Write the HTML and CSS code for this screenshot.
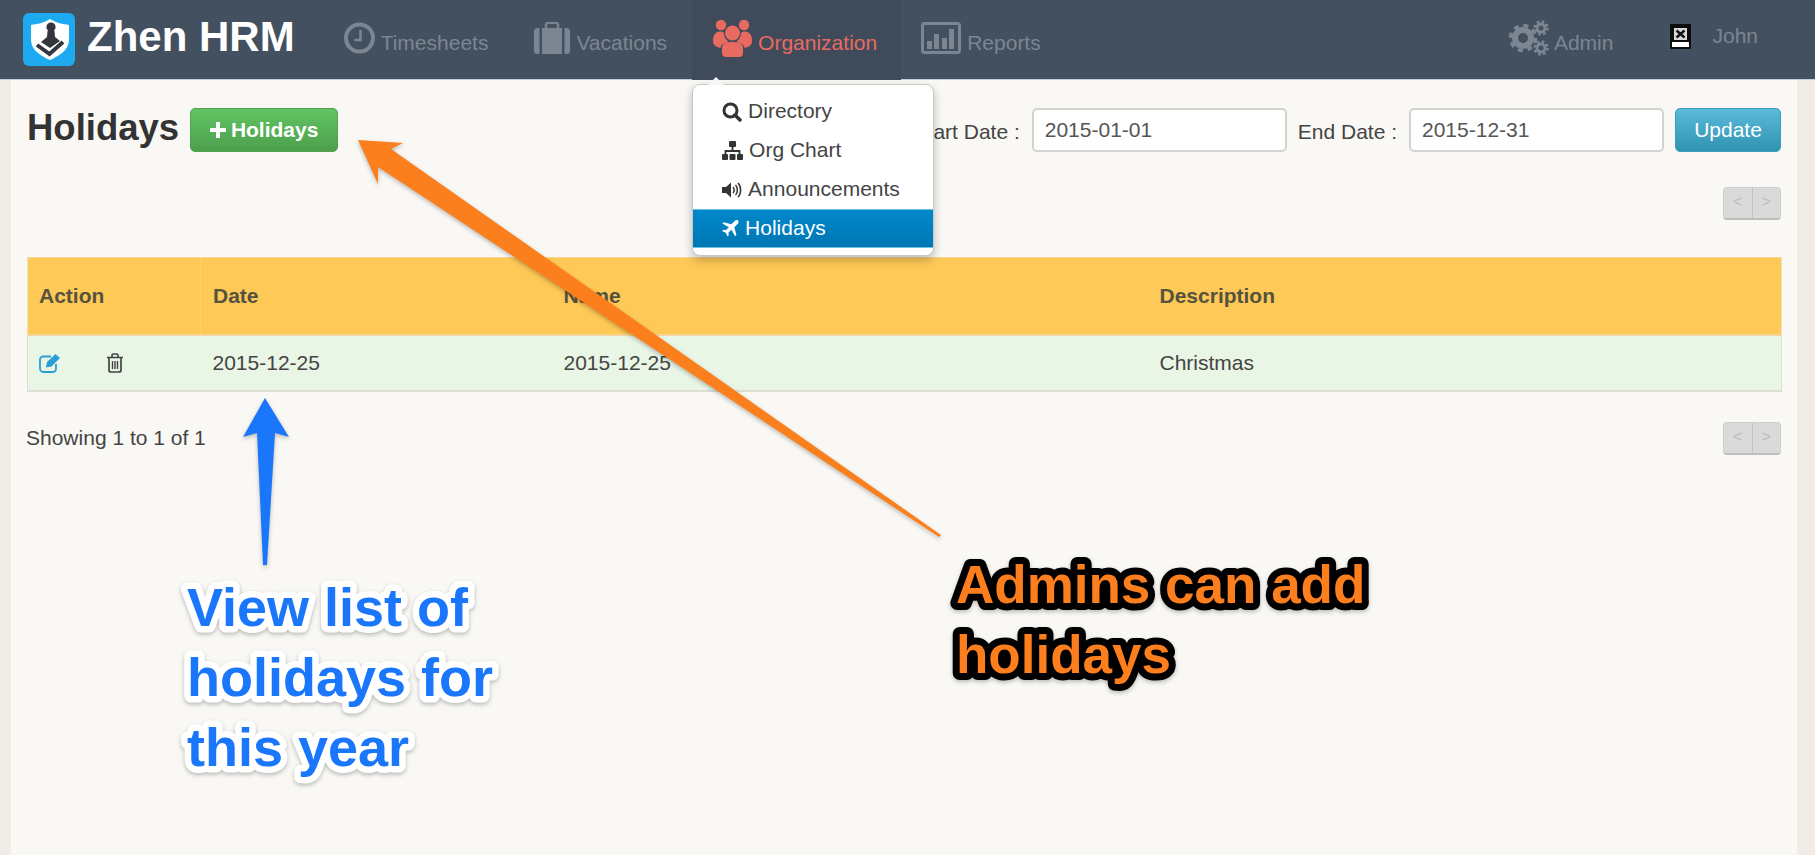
FILE: index.html
```html
<!DOCTYPE html>
<html lang="en">
<head>
    <meta charset="UTF-8">
    <title>Zhen HRM - Holidays</title>
    <link rel="stylesheet" href="styles.css">
</head>
<body>
    <header class="topbar">
        <div class="brand">
            <svg class="logo" viewBox="0 0 52 53">
                <rect width="52" height="53" rx="6" fill="#1eaaf0"/>
                <path d="M27 6C33 10 40 11 46 12V27C46 37 36 43 27 47C18 43 8 37 8 27V12C14 11 21 10 27 6Z" fill="#fff"/>
                <circle cx="28" cy="14" r="4.6" fill="#33363c"/>
                <path d="M24.500 18H31.500L32 24L37 28L27 35L18 29L24 24Z" fill="#33363c"/>
                <path d="M14 32L26.500 41L40 29" fill="none" stroke="#33363c" stroke-width="4"/>
            </svg>
            <span class="brand-name">Zhen HRM</span>
        </div>
        <nav class="nav">
            <a class="nav-item">
                <svg class="nav-icon" width="31" height="32" viewBox="0 0 31 32"><circle cx="15.500" cy="16" r="13.500" fill="none" stroke="currentColor" stroke-width="4"/><path d="M16.500 8V18H10.500" fill="none" stroke="currentColor" stroke-width="2.500"/></svg>
                <span class="nav-label">Timesheets</span>
            </a>
            <a class="nav-item">
                <svg class="nav-icon" width="36" height="32" viewBox="0 0 36 37" preserveAspectRatio="none"><path d="M12 7V3.500C12 2 13 1 14.500 1H21.500C23 1 24 2 24 3.500V7" fill="none" stroke="currentColor" stroke-width="2.500"/><rect x="8" y="7" width="20" height="30" fill="currentColor"/><path d="M5.500 7V37H3.500C1.500 37 0 35.500 0 33.500V10.500C0 8.500 1.500 7 3.500 7ZM30.500 7H32.500C34.500 7 36 8.500 36 10.500V33.500C36 35.500 34.500 37 32.500 37H30.500Z" fill="currentColor"/></svg>
                <span class="nav-label">Vacations</span>
            </a>
            <a class="nav-item nav-item-active">
                <svg class="nav-icon" width="39" height="38" viewBox="0 0 39 38"><circle cx="8" cy="6" r="5.200" fill="currentColor"/><circle cx="31" cy="6" r="5.200" fill="currentColor"/><circle cx="19.500" cy="14" r="7.500" fill="currentColor"/><path d="M0 22C0 15 3 12.500 8 12.500C10 12.500 11 13.500 11 15C11 18 14 22 16 23C11 24 7.500 26 7.500 29C3 28 0 26 0 22ZM39 22C39 15 36 12.500 31 12.500C29 12.500 28 13.500 28 15C28 18 25 22 23 23C28 24 31.500 26 31.500 29C36 28 39 26 39 22Z" fill="currentColor"/><path d="M9 34V29C9 25 13 23 19.500 23C26 23 30 25 30 29V34C30 36.500 28.500 38 26 38H13C10.500 38 9 36.500 9 34Z" fill="currentColor"/></svg>
                <span class="nav-label">Organization</span>
                <div class="dropdown">
                    <span class="dropdown-caret"></span>
                    <div class="dropdown-item">
                        <svg width="20" height="20" viewBox="0 0 20 20"><circle cx="8.500" cy="8.500" r="6.500" fill="none" stroke="currentColor" stroke-width="3"/><path d="M13 13L18 18" stroke="currentColor" stroke-width="3.500" stroke-linecap="round"/></svg>
                        <span>Directory</span>
                    </div>
                    <div class="dropdown-item">
                        <svg width="21" height="20" viewBox="0 0 21 20"><rect x="7" y="0" width="7" height="6" rx="1" fill="currentColor"/><path d="M10.500 6V10M3.500 14V10H17.500V14" fill="none" stroke="currentColor" stroke-width="1.800"/><rect x="0" y="13" width="6" height="6" rx="1" fill="currentColor"/><rect x="7.500" y="13" width="6" height="6" rx="1" fill="currentColor"/><rect x="15" y="13" width="6" height="6" rx="1" fill="currentColor"/></svg>
                        <span>Org Chart</span>
                    </div>
                    <div class="dropdown-item">
                        <svg width="20" height="20" viewBox="0 0 20 20"><path d="M0 7H4L9 2.500V17.500L4 13H0Z" fill="currentColor"/><path d="M11 7C12.500 8.500 12.500 11.500 11 13M13.500 5C16 7.500 16 12.500 13.500 15M16 3C19.500 6.500 19.500 13.500 16 17" fill="none" stroke="currentColor" stroke-width="1.500"/></svg>
                        <span>Announcements</span>
                    </div>
                    <div class="dropdown-item dropdown-item-active">
                        <svg width="17" height="19" viewBox="2 1 20 21"><path d="M21 2C20 1 18 1.500 16.500 3L13 6.500L4 4L2.500 5.500L10 10L6.500 13.500L3.500 13L2 14.500L6.500 16.500L8.500 21L10 19.500L9.500 16.500L13 13L17.500 20.500L19 19L16.500 10L20 6.500C21.500 5 22 3 21 2Z" fill="currentColor"/></svg>
                        <span>Holidays</span>
                    </div>
                </div>
            </a>
            <a class="nav-item">
                <svg class="nav-icon" width="40" height="32" viewBox="0 0 40 32"><rect x="1.500" y="1.500" width="37" height="29" rx="2" fill="none" stroke="currentColor" stroke-width="3"/><rect x="6" y="19" width="5" height="8" fill="currentColor"/><rect x="13" y="12" width="5" height="15" fill="currentColor"/><rect x="21" y="16" width="5" height="11" fill="currentColor"/><rect x="28" y="7" width="5" height="20" fill="currentColor"/></svg>
                <span class="nav-label">Reports</span>
            </a>
        </nav>
        <div class="nav-right">
            <a class="nav-user">
                <svg class="nav-icon" width="40" height="36" viewBox="0 0 40 36">
                    <circle cx="14" cy="18" r="8" fill="none" stroke="currentColor" stroke-width="6"/>
                    <circle cx="14" cy="18" r="12.500" fill="none" stroke="currentColor" stroke-width="3.500" stroke-dasharray="5 4.820"/>
                    <circle cx="32" cy="8" r="4" fill="none" stroke="currentColor" stroke-width="3"/>
                    <circle cx="32" cy="8" r="6.500" fill="none" stroke="currentColor" stroke-width="2.500" stroke-dasharray="2.600 2.500"/>
                    <circle cx="32" cy="28" r="4" fill="none" stroke="currentColor" stroke-width="3"/>
                    <circle cx="32" cy="28" r="6.500" fill="none" stroke="currentColor" stroke-width="2.500" stroke-dasharray="2.600 2.500"/>
                </svg>
                <span class="nav-label">Admin</span>
            </a>
            <a class="nav-user nav-user-john">
                <svg class="broken-img" width="21" height="25" viewBox="0 0 21 25"><rect width="21" height="25" rx="1" fill="#0c0c0c"/><rect x="2" y="18" width="17" height="5" fill="#fff"/><rect x="4" y="4" width="13" height="12" fill="#d8d8d8"/><path d="M6.500 6.500L14.500 13.500M14.500 6.500L6.500 13.500" stroke="#111" stroke-width="2.500"/></svg>
                <span>John</span>
            </a>
        </div>
    </header>

    <main class="content">
        <div class="toolbar">
            <h1 class="page-title">Holidays</h1>
            <button class="btn btn-green">
                <svg width="16" height="16" viewBox="0 0 16 16"><path d="M6 0H10V6H16V10H10V16H6V10H0V6H6Z" fill="currentColor"/></svg>
                Holidays
            </button>
            <form class="filter">
                <label class="filter-label">Start Date :</label>
                <input class="filter-input" type="text" value="2015-01-01">
                <label class="filter-label">End Date :</label>
                <input class="filter-input" type="text" value="2015-12-31">
                <button class="btn btn-blue" type="button">Update</button>
            </form>
        </div>

        <div class="pager-row pager-row-top">
            <div class="pager"><span>&lt;</span><span>&gt;</span></div>
        </div>

        <table class="grid">
            <colgroup>
                <col class="col-action">
                <col class="col-date">
                <col class="col-name">
                <col class="col-desc">
            </colgroup>
            <thead>
                <tr>
                    <th>Action</th>
                    <th>Date</th>
                    <th>Name</th>
                    <th>Description</th>
                </tr>
            </thead>
            <tbody>
                <tr>
                    <td>
                        <div class="row-actions">
                            <svg class="icon-edit" width="22" height="20" viewBox="0 0 22 20"><path d="M12 3.500H4C2.500 3.500 1 5 1 6.500V15.500C1 17.500 2.500 19 4 19H13.500C15.500 19 17 17.500 17 15.500V11" fill="none" stroke="currentColor" stroke-width="1.800"/><path d="M8 9L16.500 1L21 5L12.500 13.500L7 14.500Z" fill="currentColor"/></svg>
                            <svg class="icon-trash" width="18" height="20" viewBox="0 0 18 20"><path d="M1 4.500H17M6 4.500V2.500C6 1.500 6.800 1 7.500 1H10.500C11.200 1 12 1.500 12 2.500V4.500M3 4.500V17C3 18.200 3.800 19 5 19H13C14.200 19 15 18.200 15 17V4.500" fill="none" stroke="currentColor" stroke-width="1.700"/><path d="M6.500 8V16M9 8V16M11.500 8V16" stroke="currentColor" stroke-width="1.400"/></svg>
                        </div>
                    </td>
                    <td>2015-12-25</td>
                    <td>2015-12-25</td>
                    <td>Christmas</td>
                </tr>
            </tbody>
        </table>

        <div class="pager-row pager-row-bottom">
            <span class="showing">Showing 1 to 1 of 1</span>
            <div class="pager"><span>&lt;</span><span>&gt;</span></div>
        </div>
    </main>

    <!-- callouts drawn over the screenshot -->
    <svg class="arrows" width="1815" height="855" viewBox="0 0 1815 855">
        <path d="M358 140L403 143L391 149L941 535L939 537L378 167L378 184Z" fill="#fb7f1c"/>
        <path d="M265 398L289 437L275 433L267 565H263L257 433L243 437Z" fill="#1a76fb"/>
        <text class="note note-blue">
            <tspan x="187" y="626">View list of</tspan>
            <tspan x="187" y="696">holidays for</tspan>
            <tspan x="187" y="766">this year</tspan>
        </text>
        <text class="note note-orange">
            <tspan x="956" y="603">Admins can add</tspan>
            <tspan x="956" y="673">holidays</tspan>
        </text>
    </svg>
</body>
</html>
```

FILE: styles.css
```css
body {
    margin: 0;
    height: 855px;
    overflow: hidden;
    background-color: #f1ede6;
    font-family: "Liberation Sans", Arial, sans-serif;
    font-size: 21px;
    color: #444;
}

/* top bar */
.topbar {
    display: flex;
    height: 79px;
    background-color: #435060;
    border-bottom: 1px solid #c9ced4;
}

.brand {
    display: flex;
    align-items: center;
    gap: 12px;
    margin-left: 23px;
}

.logo {
    width: 52px;
    height: 53px;
}

.brand-name {
    color: #fff;
    font-size: 42px;
    font-weight: bold;
    line-height: 1;
    margin-top: -6px;
}

.nav {
    display: flex;
    margin-left: 26px;
}

.nav-item {
    position: relative;
    display: flex;
    align-items: center;
    gap: 6px;
    padding: 0 23px;
    color: #7c8692;
}

.nav-label {
    margin-top: 6px;
}

.nav-icon {
    margin-bottom: 4px;
}

.nav-item-active {
    height: 80px;
    margin: 0 -3px 0 2px;
    padding: 0 24px 0 21px;
    background-color: #3f4b5a;
    color: #e96a60;
}

.nav-right {
    display: flex;
    margin-left: auto;
    padding-right: 57px;
    gap: 57px;
}

.nav-user {
    display: flex;
    align-items: center;
    gap: 5px;
    color: #7c8692;
}

.nav-user-john {
    gap: 21px;
    margin-bottom: 7px;
}

.broken-img {
    margin-top: 1px;
}

/* organization menu */
.dropdown {
    position: absolute;
    top: 84px;
    left: 0;
    z-index: 5;
    box-sizing: border-box;
    width: 242px;
    height: 172px;
    padding: 7px 0;
    background-color: #fff;
    border: 1px solid #c8c8c8;
    border-radius: 8px;
    box-shadow: 0 4px 10px rgba(0, 0, 0, 0.25);
    color: #444;
}

.dropdown-caret {
    position: absolute;
    top: -8px;
    left: 15px;
    border-left: 8px solid transparent;
    border-right: 8px solid transparent;
    border-bottom: 8px solid #f6f6f4;
}

.dropdown-item {
    display: flex;
    align-items: center;
    gap: 6px;
    box-sizing: border-box;
    height: 39px;
    padding-left: 29px;
}

.dropdown-item span {
    margin-top: -1px;
}

.dropdown-item svg {
    color: #333;
}

.dropdown-item-active {
    background: linear-gradient(#0088cc, #0077b3);
    border-top: 1px solid #6cc4e4;
    border-bottom: 1px solid #6cc4e4;
    color: #fff;
}

.dropdown-item-active svg {
    color: #fff;
}

/* page */
.content {
    box-sizing: border-box;
    height: 775px;
    margin: 0 18px 0 11px;
    padding: 28px 16px 0;
    background-color: #f9f8f4;
}

.toolbar {
    display: flex;
    align-items: center;
    height: 44px;
}

.page-title {
    margin: -4px 11px 0 0;
    font-size: 36.500px;
    line-height: 44px;
    color: #333;
}

.btn {
    box-sizing: border-box;
    height: 44px;
    border: 1px solid;
    border-radius: 5px;
    font-family: inherit;
    color: #fff;
}

.btn-green {
    display: flex;
    align-items: center;
    gap: 5px;
    width: 148px;
    justify-content: center;
    font-size: 21px;
    font-weight: bold;
    background: linear-gradient(#62c462, #4c9f4c);
    border-color: #51a351;
}

.btn-blue {
    width: 106px;
    font-size: 21px;
    background: linear-gradient(#5bbad9, #2f93b2);
    border-color: #3b9ebd;
}

.filter {
    display: flex;
    align-items: center;
    margin-left: auto;
}

.filter-label {
    margin: 4px 12px 0 11px;
}

.filter-input {
    box-sizing: border-box;
    width: 255px;
    height: 44px;
    margin: 0;
    padding: 0 11px;
    border: 2px solid #d2d2d0;
    border-radius: 5px;
    background-color: #fff;
    font-family: inherit;
    font-size: 21px;
    color: #555;
}

.filter .btn-blue {
    margin-left: 11px;
}

.pager-row {
    display: flex;
    align-items: center;
    justify-content: space-between;
}

.pager-row-top {
    justify-content: flex-end;
    margin-top: 35px;
}

.pager-row-bottom {
    margin-top: 30px;
}

.pager {
    display: flex;
    box-sizing: border-box;
    width: 58px;
    height: 33px;
    background-color: #dadada;
    border: 1px solid #cfcfcf;
    border-bottom: 2px solid #bdbdbd;
    border-radius: 4px;
    font-size: 16px;
    color: #bcbcbc;
}

.pager span {
    flex: 1;
    text-align: center;
    line-height: 27px;
}

.pager span + span {
    border-left: 1px solid #c2c2c2;
}

.showing {
    margin: -2px 0 0 -1px;
    color: #444;
}

/* table */
.grid {
    width: 1754px;
    margin-top: 37px;
    table-layout: fixed;
    border-collapse: collapse;
}

.col-action { width: 173px; }
.col-date { width: 351px; }
.col-name { width: 596px; }
.col-desc { width: 634px; }

.grid th {
    height: 76px;
    padding: 0 12px;
    background-color: #fec956;
    border: 1px solid #f3d79a;
    border-width: 1px 0 2px;
    text-align: left;
    font-size: 21px;
    color: #55523f;
}

.grid th:first-child {
    border-right: 1px solid #f8d279;
    border-left: 1px solid #efe3c4;
}

.grid th:last-child {
    border-right: 1px solid #efe3c4;
}

.grid td {
    height: 54px;
    padding: 0 12px;
    background-color: #e9f5e5;
    border-bottom: 2px solid #dcdfd8;
    color: #444;
}

.grid td:first-child {
    border-left: 1px solid #dcdfd8;
}

.grid td:last-child {
    border-right: 1px solid #dcdfd8;
}

.grid th:first-child, .grid td:first-child {
    padding-left: 11px;
}

.row-actions {
    display: flex;
    align-items: center;
    gap: 45px;
}

.icon-edit {
    color: #2a9ed6;
}

.icon-trash {
    color: #444;
}

/* callouts */
.arrows {
    position: absolute;
    top: 0;
    left: 0;
    z-index: 6;
    pointer-events: none;
    filter: drop-shadow(0 2px 2px rgba(0, 0, 0, 0.25));
}

.note {
    font-weight: bold;
    paint-order: stroke fill;
    stroke-linejoin: round;
}

.note-blue {
    font-size: 54px;
    fill: #1a76fb;
    stroke: #fff;
    stroke-width: 13px;
}

.note-orange {
    font-size: 53px;
    fill: #fd7e1c;
    stroke: #000;
    stroke-width: 14px;
}
```
